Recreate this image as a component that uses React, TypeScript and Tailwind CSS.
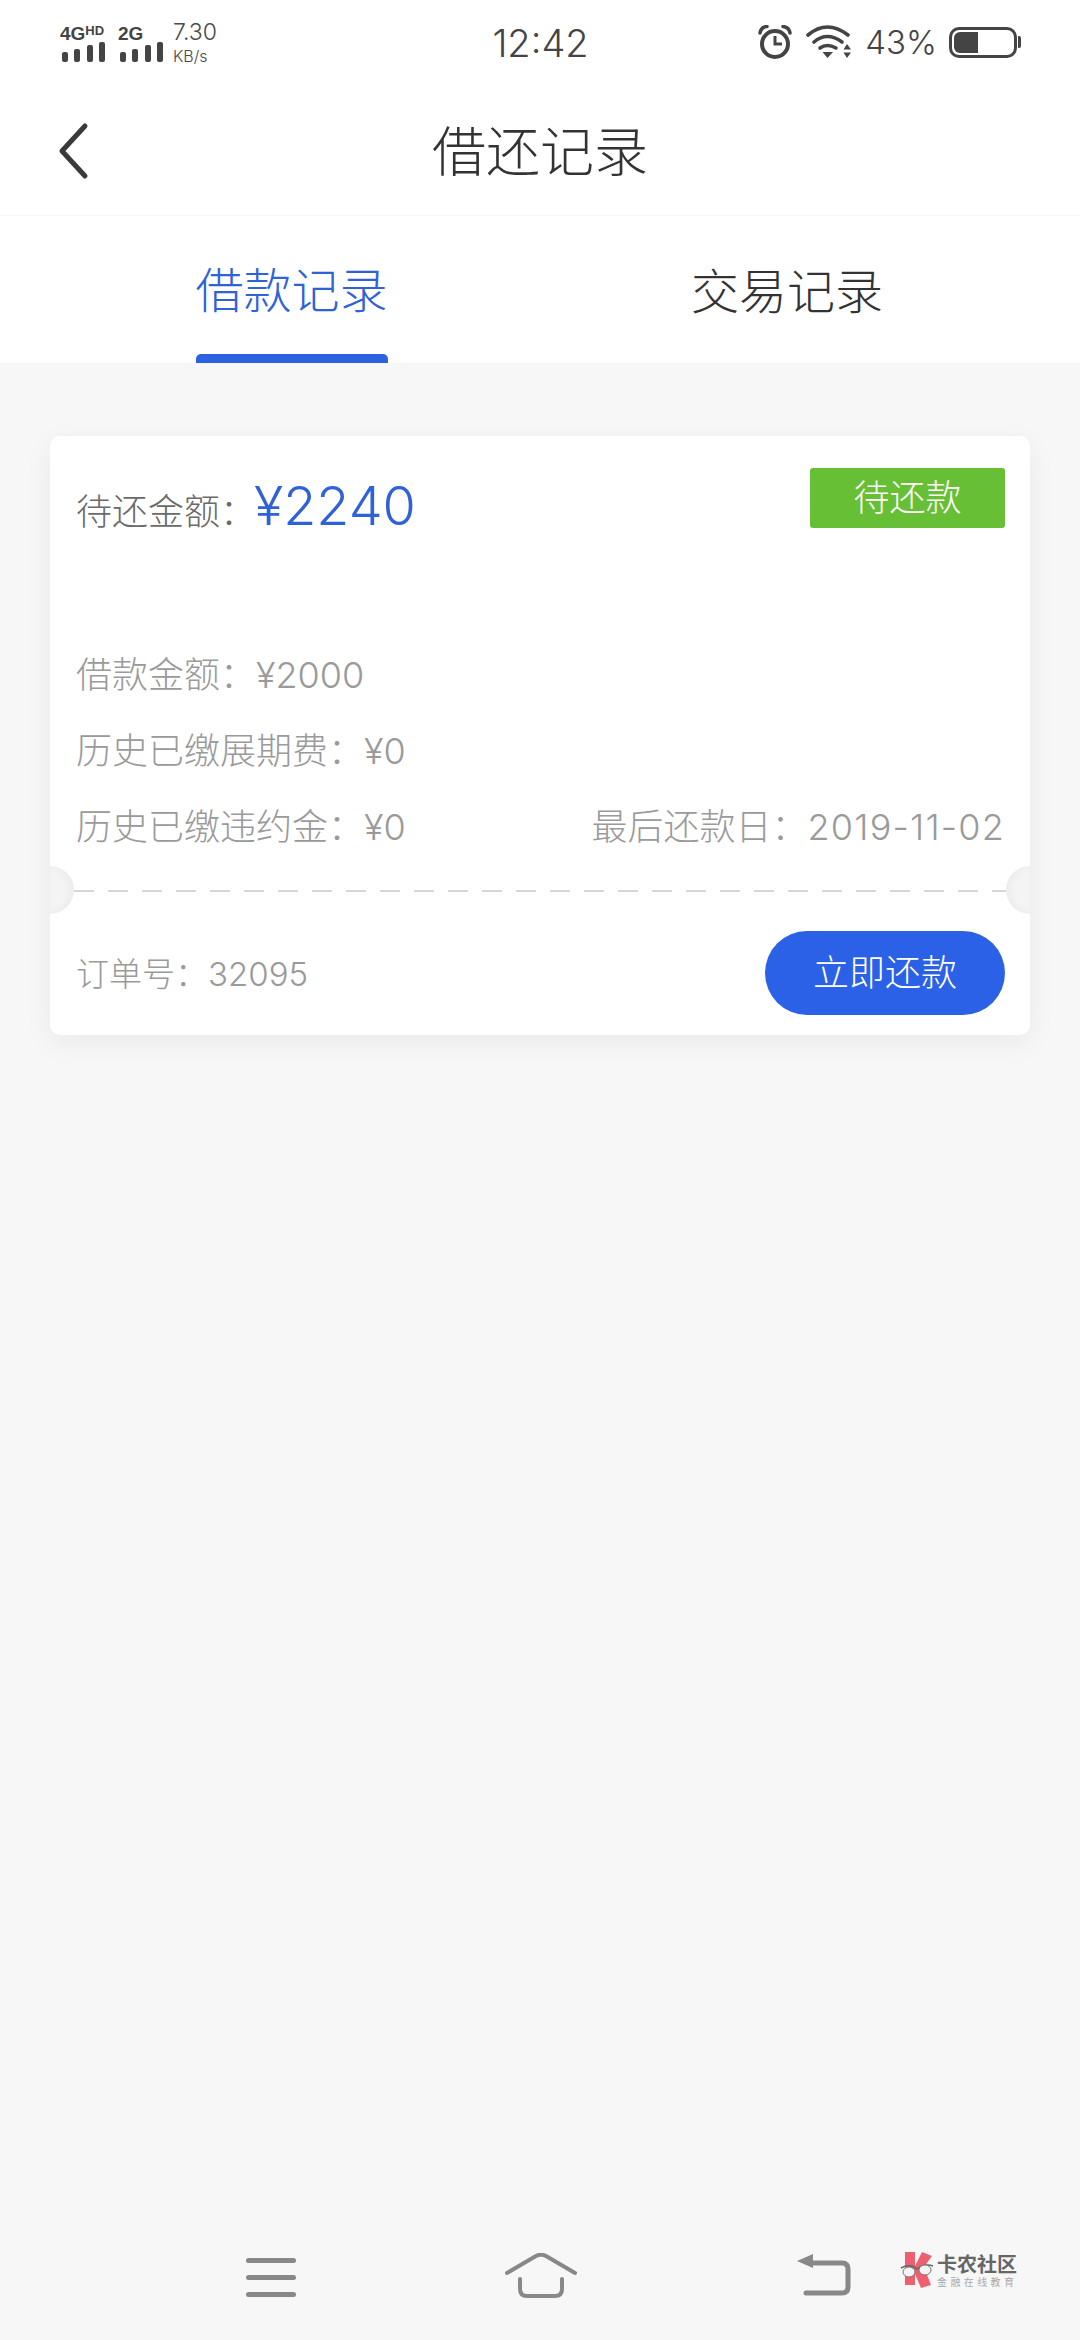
const font = "font-['Inter','Noto_Sans_CJK_SC',sans-serif]";

function SignalBars({ label, sup }: { label: string; sup?: string }) {
  return (
    <div className="flex flex-col w-[45px] pt-[1px]">
      <div className="h-[19px] flex items-start leading-[19px] text-[19px] font-bold text-[#444] font-['Liberation_Sans',sans-serif]">
        {label}
        {sup && <span className="text-[13px] leading-[13px]">{sup}</span>}
      </div>
      <div className="flex items-end justify-between h-[20px] mt-[-1px] pl-[2px]">
        <div className="w-[6px] h-[10px] rounded-[2px] bg-[#444]" />
        <div className="w-[6px] h-[13px] rounded-[2px] bg-[#444]" />
        <div className="w-[6px] h-[17px] rounded-[2px] bg-[#444]" />
        <div className="w-[6px] h-[20px] rounded-[2px] bg-[#444]" />
      </div>
    </div>
  );
}

function StatusBar() {
  return (
    <div className="h-[84px] flex items-center pl-[60px] pr-[59px] text-[#444]">
      <div className="flex flex-1 items-center">
        <SignalBars label="4G" sup="HD" />
        <div className="w-[13px]" />
        <SignalBars label="2G" />
        <div className="ml-[10px] flex flex-col text-[#4a4a4a] font-light">
          <span className="text-[23px] leading-[28px]">7.30</span>
          <span className="text-[16px] leading-[20px]">KB/s</span>
        </div>
      </div>
      <div className="w-[110px] text-center text-[38px] leading-none pt-[2px] font-light">12:42</div>
      <div className="flex flex-1 items-center justify-end">
        <svg width="34" height="34" viewBox="0 0 34 34" fill="none" stroke="#444">
          <circle cx="17" cy="19" r="13" strokeWidth="4" />
          <path d="M17 11v8h7" strokeWidth="3" />
          <path d="M2 8 Q3 2 9 1.5M32 8 Q31 2 25 1.5" strokeWidth="3.5" strokeLinecap="round" />
        </svg>
        <svg className="ml-[14px]" width="46" height="34" viewBox="0 0 46 34" fill="none" stroke="#444" strokeLinecap="round">
          <path d="M2 10 Q21 -6 42 10" strokeWidth="3.6" />
          <path d="M8 17 Q21 6 36 17" strokeWidth="3.6" />
          <path d="M14 23 Q21 18 30 23" strokeWidth="3.6" />
          <path d="M16.5 27 L27 27 L21.5 33 Z" fill="#444" stroke="none" />
          <path d="M41 19 L45 24.500 L37.500 24.500 Z M37.500 27.500 L45 27.500 L41 33 Z" fill="#444" stroke="none" />
        </svg>
        <span className="ml-[13px] text-[33px] leading-none font-light">43%</span>
        <div className="ml-[12px] flex items-center">
          <div className="w-[68px] h-[31px] rounded-[10px] border-[3px] border-[#444] p-[2px]">
            <div className="w-[24px] h-full rounded-l-[6px] bg-[#444]" />
          </div>
          <div className="w-[3px] h-[12px] ml-[1px] rounded-r-[2px] bg-[#444]" />
        </div>
      </div>
    </div>
  );
}

function NavBar() {
  return (
    <div className="h-[132px] flex items-center justify-center relative border-b border-[#f6f6f6]">
      <svg className="absolute left-[56px] top-[38px]" width="34" height="58" viewBox="0 0 34 58" fill="none" stroke="#3a3a3a" strokeWidth="5" strokeLinecap="round" strokeLinejoin="round">
        <path d="M29 4 L6 29 L29 54" />
      </svg>
      <span className="text-[54px] leading-none text-[#333] pt-[6px] font-light">借还记录</span>
    </div>
  );
}

function Tabs() {
  return (
    <div className="h-[147px] flex bg-white">
      <div className="w-[583px] flex flex-col items-center">
        <div className="flex-1 flex items-center text-[48px] text-[#2f62d8] leading-none pt-[11px] font-light">借款记录</div>
        <div className="w-[192px] h-[9px] rounded-t-[5px] bg-[#2c62e0]" />
      </div>
      <div className="w-[408px] flex items-center justify-center text-[48px] text-[#333] leading-none pt-[5px] font-light">交易记录</div>
    </div>
  );
}

function Notch({ side }: { side: "left" | "right" }) {
  return (
    <div
      className={
        side === "left"
          ? "absolute left-[-24px] top-[430px] w-[48px] h-[48px] rounded-full bg-[#f4f4f4] shadow-[inset_-5px_0_7px_rgba(0,0,0,0.03)]"
          : "absolute right-[-24px] top-[430px] w-[48px] h-[48px] rounded-full bg-[#f4f4f4] shadow-[inset_5px_0_7px_rgba(0,0,0,0.03)]"
      }
    />
  );
}

function RecordCard() {
  return (
    <div className="relative mt-[73px] mx-[50px] h-[599px] rounded-[10px] bg-white shadow-[0_8px_30px_rgba(0,0,0,0.06)] overflow-hidden pl-[26px] pr-[25px] text-[36px] text-[#9a9a9a] font-light">
      <div className="h-[140px] flex justify-between pt-[32px]">
        <div className="flex items-baseline mt-[-3px] text-[#6a6a6a]">
          <span>待还金额：</span>
          <span className="text-[54px] font-[350] text-[#2f62d8] ml-[-2px]">¥2240</span>
        </div>
        <div className="w-[195px] h-[60px] flex items-center justify-center rounded-[3px] bg-[#67bf35] text-white">待还款</div>
      </div>
      <div className="mt-[74px] flex flex-col gap-[25px] leading-[51px]">
        <div>借款金额：¥2000</div>
        <div>历史已缴展期费：¥0</div>
        <div className="flex justify-between">
          <span>历史已缴违约金：¥0</span>
          <span>最后还款日：<span className="tracking-[1.2px]">2019-11-02</span></span>
        </div>
      </div>
      <div className="mt-[37px] ml-[-2px] mr-[-1px] h-[2px] bg-[repeating-linear-gradient(90deg,#d6d6d6_0,#d6d6d6_20px,transparent_20px,transparent_34px)]" />
      <div className="mt-[39px] flex items-center justify-between">
        <span className="text-[33px] pt-[3px]">订单号：32095</span>
        <div className="w-[240px] h-[84px] flex items-center justify-center rounded-full bg-[#2a61e6] text-white">立即还款</div>
      </div>
      <Notch side="left" />
      <Notch side="right" />
    </div>
  );
}

function BottomBar() {
  return (
    <div className="h-[120px] relative">
      <div className="absolute left-[246px] top-[38px] flex flex-col gap-[12px]">
        <div className="w-[50px] h-[5px] rounded-full bg-[#888]" />
        <div className="w-[50px] h-[5px] rounded-full bg-[#888]" />
        <div className="w-[50px] h-[5px] rounded-full bg-[#888]" />
      </div>
      <svg className="absolute left-[505px] top-[33px]" width="72" height="46" viewBox="0 0 72 46" fill="none" stroke="#888" strokeWidth="4" strokeLinecap="round" strokeLinejoin="round">
        <path d="M2 20 L31 3 Q36 0.500 41 3 L70 20" />
        <path d="M15 26 V36 Q15 43 22 43 H50 Q57 43 57 36 V26" />
      </svg>
      <svg className="absolute left-[796px] top-[33px]" width="56" height="44" viewBox="0 0 56 44" fill="none" stroke="#888" strokeWidth="5" strokeLinecap="round" strokeLinejoin="round">
        <path d="M16 10 H46 Q52 10 52 16 V34 Q52 40 46 40 H10" />
        <path d="M1 8 L17 1 V15 Z" fill="#888" stroke="none" />
      </svg>
      <div className="absolute left-[900px] top-[32px] flex items-center">
        <svg width="35" height="36" viewBox="0 0 35 36">
          <path d="M5 0 H15 V14 L22 0 L32 4 L24 15 L31 33 L21 36 L15 22 V33 H5 Z" fill="#ee6070" />
          <path d="M1 16 Q10 11 17 17 Q25 11 33 14" fill="none" stroke="#666" strokeWidth="1.500" />
          <ellipse cx="9" cy="20" rx="6" ry="5" fill="#f4f4f4" stroke="#777" strokeWidth="1" />
          <ellipse cx="25" cy="18" rx="6" ry="5" fill="#f4f4f4" stroke="#777" strokeWidth="1" />
        </svg>
        <div className="ml-[2px] flex flex-col font-['Noto_Sans_CJK_SC',sans-serif]">
          <span className="text-[20px] leading-[22px] font-bold text-[#666]">卡农社区</span>
          <span className="text-[10px] leading-[13px] tracking-[3.400px] text-[#aaa]">金融在线教育</span>
        </div>
      </div>
    </div>
  );
}

export default function App() {
  return (
    <div className={`${font} w-[1080px] h-[2340px] flex flex-col bg-[#f7f7f7]`}>
      <div className="bg-white">
        <StatusBar />
        <NavBar />
      </div>
      <Tabs />
      <RecordCard />
      <div className="flex-1" />
      <BottomBar />
    </div>
  );
}
